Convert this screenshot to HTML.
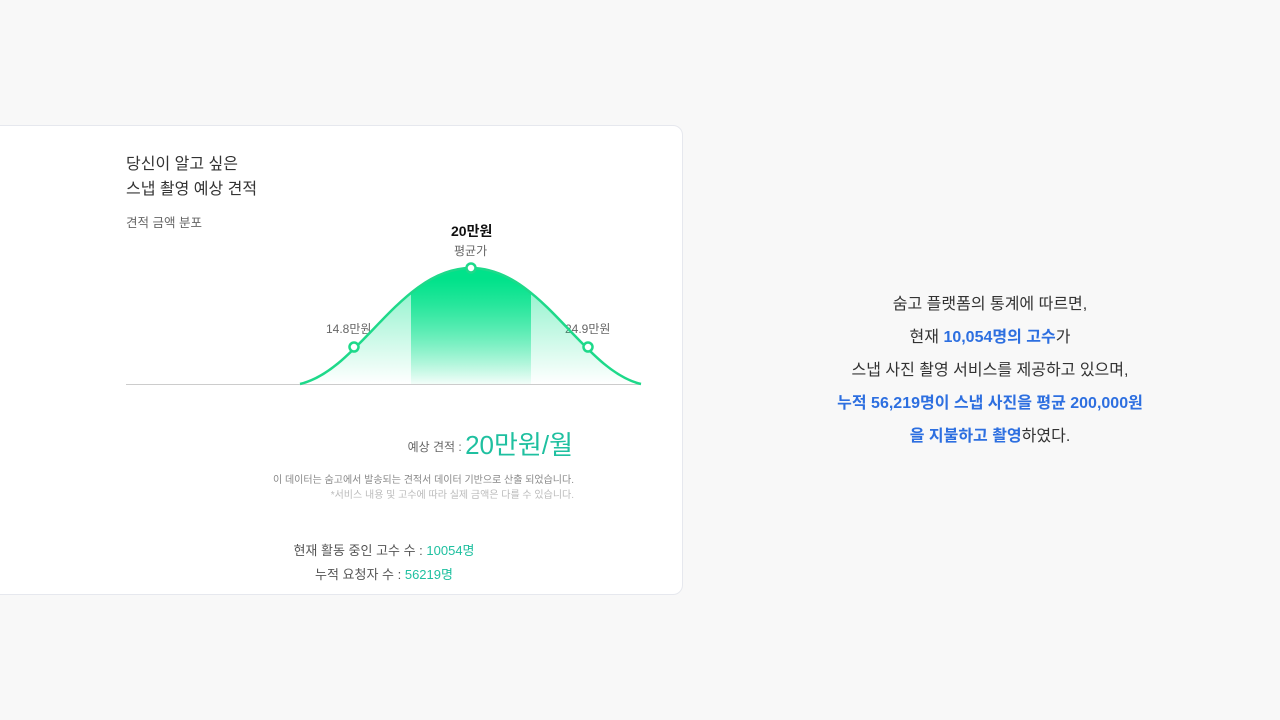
<!DOCTYPE html><html><head><meta charset="utf-8"><style>
body{margin:0;width:1280px;height:720px;background:#f8f8f8;font-family:"Liberation Sans","Noto Sans CJK KR",sans-serif;position:relative;overflow:hidden}
.card{position:absolute;left:-10px;top:125px;width:693px;height:470px;background:#fff;border:1px solid #e6e8ee;border-radius:10px;box-sizing:border-box}
.a{position:absolute;white-space:nowrap}
.r{position:absolute;left:790px;width:400px;text-align:center;font-size:16px;color:#333}
.b{color:#2d6fe0;font-weight:bold}
</style></head><body>
<div class="card"></div>
<div class="a" style="left:126px;top:152px;font-size:16px;line-height:25px;color:#333">당신이 알고 싶은<br>스냅 촬영 예상 견적</div>
<div class="a" style="left:126px;top:212px;font-size:12.5px;color:#666">견적 금액 분포</div>
<div class="a" style="left:451px;top:221px;font-size:14px;font-weight:bold;color:#111">20만원</div>
<div class="a" style="left:454px;top:242px;font-size:12px;color:#666">평균가</div>
<div class="a" style="left:326px;top:320px;font-size:12px;color:#666">14.8만원</div>
<div class="a" style="left:565px;top:320px;font-size:12px;color:#666">24.9만원</div>
<svg class="a" style="left:0;top:0" width="700" height="400">
<defs><linearGradient id="g1" x1="0" y1="0" x2="0" y2="1"><stop offset="0" stop-color="#00e28a" stop-opacity=".55"/><stop offset="1" stop-color="#00e28a" stop-opacity="0"/></linearGradient>
<linearGradient id="g2" x1="0" y1="0" x2="0" y2="1"><stop offset=".15" stop-color="#00e28a"/><stop offset="1" stop-color="#00e28a" stop-opacity=".05"/></linearGradient>
<clipPath id="c"><path d="M300 384 C360 370 400 268 471 268 C542 268 582 370 641 384 Z"/></clipPath></defs>
<line x1="126" y1="384.5" x2="641" y2="384.5" stroke="#ccc"/>
<g clip-path="url(#c)"><rect x="300" y="260" width="341" height="124" fill="url(#g1)"/><rect x="411" y="260" width="120" height="124" fill="url(#g2)"/></g>
<path d="M300 384 C360 370 400 268 471 268 C542 268 582 370 641 384" fill="none" stroke="#1ed98a" stroke-width="2.5"/>
<circle cx="471" cy="268" r="4.5" fill="#fff" stroke="#1ed98a" stroke-width="2.5"/>
<circle cx="354" cy="347" r="4.5" fill="#fff" stroke="#1ed98a" stroke-width="2.5"/>
<circle cx="588" cy="347" r="4.5" fill="#fff" stroke="#1ed98a" stroke-width="2.5"/>
<line x1="194" y1="519.5" x2="574" y2="519.5" stroke="#f0f0f0"/>
</svg>
<div class="a" style="right:707px;top:430px;color:#666;font-size:12px;line-height:30px">예상 견적 : <span style="font-size:26px;color:#1fc0a0;vertical-align:-3px">20만원/월</span></div>
<div class="a" style="right:706px;top:471px;font-size:10px;color:#888">이 데이터는 숨고에서 발송되는 견적서 데이터 기반으로 산출 되었습니다.</div>
<div class="a" style="right:706px;top:486px;font-size:10px;color:#bbb">*서비스 내용 및 고수에 따라 실제 금액은 다를 수 있습니다.</div>
<div class="a" style="left:0;width:768px;text-align:center;top:540px;font-size:13px;color:#555">현재 활동 중인 고수 수 : <span style="color:#1fc0a0">10054명</span></div>
<div class="a" style="left:0;width:768px;text-align:center;top:564px;font-size:13px;color:#555">누적 요청자 수 : <span style="color:#1fc0a0">56219명</span></div>
<div class="r" style="top:290px">숨고 플랫폼의 통계에 따르면,</div>
<div class="r" style="top:323px">현재 <span class="b">10,054명의 고수</span>가</div>
<div class="r" style="top:356px">스냅 사진 촬영 서비스를 제공하고 있으며,</div>
<div class="r" style="top:389px"><span class="b">누적 56,219명이 스냅 사진을 평균 200,000원</span></div>
<div class="r" style="top:422px"><span class="b">을 지불하고 촬영</span>하였다.</div>
</body></html>
